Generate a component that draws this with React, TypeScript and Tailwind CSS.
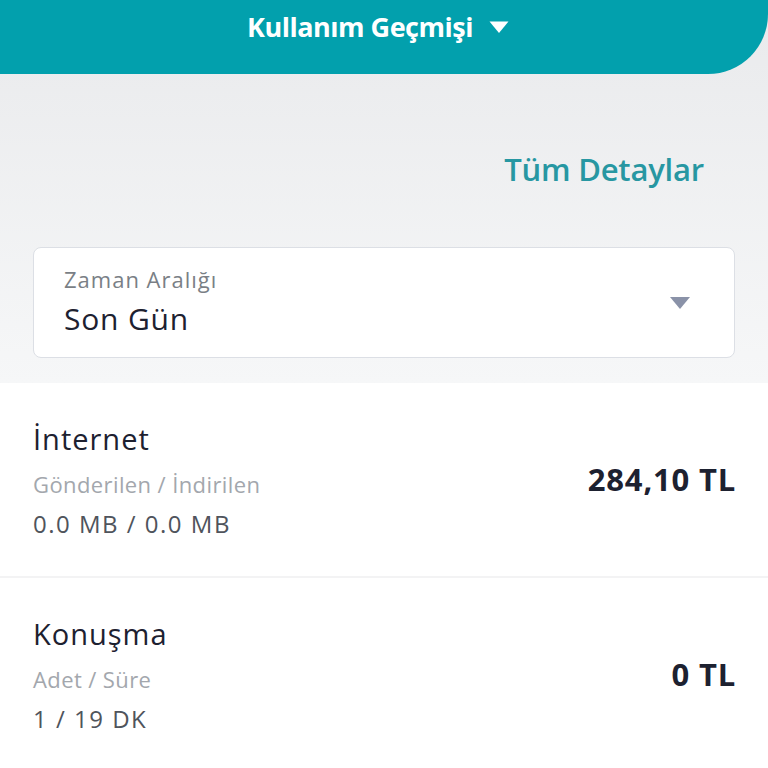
import React from "react";

export default function App() {
  const font = { fontFamily: "'Open Sans', 'Noto Sans', sans-serif" };
  return (
    <div className="w-[768px] h-[768px] overflow-hidden bg-white" style={font}>
      <div className="bg-gradient-to-b from-[#e9eaec] to-[#f6f7f8]">
        <div className="h-[74px] bg-[#02a0ad] rounded-br-[60px] flex items-center justify-center gap-[16px] pb-[20px] pr-[12px]">
          <span className="text-white text-[27px] font-bold tracking-[-0.5px]">Kullanım Geçmişi</span>
          <svg width="20" height="13" viewBox="0 0 20 13">
            <path d="M0.5 0.5 H19.5 L10 12 Z" fill="white" />
          </svg>
        </div>
        <div className="flex justify-end pr-[64px] pt-[80px]">
          <span className="text-[#2797a2] text-[31px] font-semibold leading-none tracking-[-0.2px]">Tüm Detaylar</span>
        </div>
        <div className="px-[33px] pt-[62px] pb-[25px]">
          <div className="h-[111px] bg-white border border-[#dcdfe5] rounded-[8px] flex items-center justify-between pl-[30px] pr-[44px]">
            <div className="flex flex-col">
              <span className="text-[#7a7f86] text-[22px] leading-none tracking-[1px] mt-[-4px]">Zaman Aralığı</span>
              <span className="text-[#1d2130] text-[30px] leading-none tracking-[0.8px] mt-[14px]">Son Gün</span>
            </div>
            <svg width="20" height="13" viewBox="0 0 20 13" className="mt-[2px]">
              <path d="M0 0 H20 L10 12 Z" fill="#8a92a8" />
            </svg>
          </div>
        </div>
      </div>
      <Row title="İnternet" sub="Gönderilen / İndirilen" val="0.0 MB / 0.0 MB" price="284,10 TL" />
      <div className="h-[2px] bg-[#f3f3f4]" />
      <Row title="Konuşma" sub="Adet / Süre" val="1 / 19 DK" price="0 TL" />
    </div>
  );
}

function Row({ title, sub, val, price }: { title: string; sub: string; val: string; price: string }) {
  return (
    <div className="h-[193px] flex items-center justify-between px-[33px]">
      <div className="flex flex-col">
        <span className="text-[#1d2130] text-[29px] leading-none tracking-[1px]">{title}</span>
        <span className="text-[#a3a7ad] text-[22px] leading-none tracking-[0.4px] mt-[20px]">{sub}</span>
        <span className="text-[#4f545c] text-[24px] leading-none tracking-[1.5px] mt-[17px]">{val}</span>
      </div>
      <span className="text-[#1d2130] text-[31px] font-bold leading-none tracking-[0.8px] mr-[-1px]">{price}</span>
    </div>
  );
}
